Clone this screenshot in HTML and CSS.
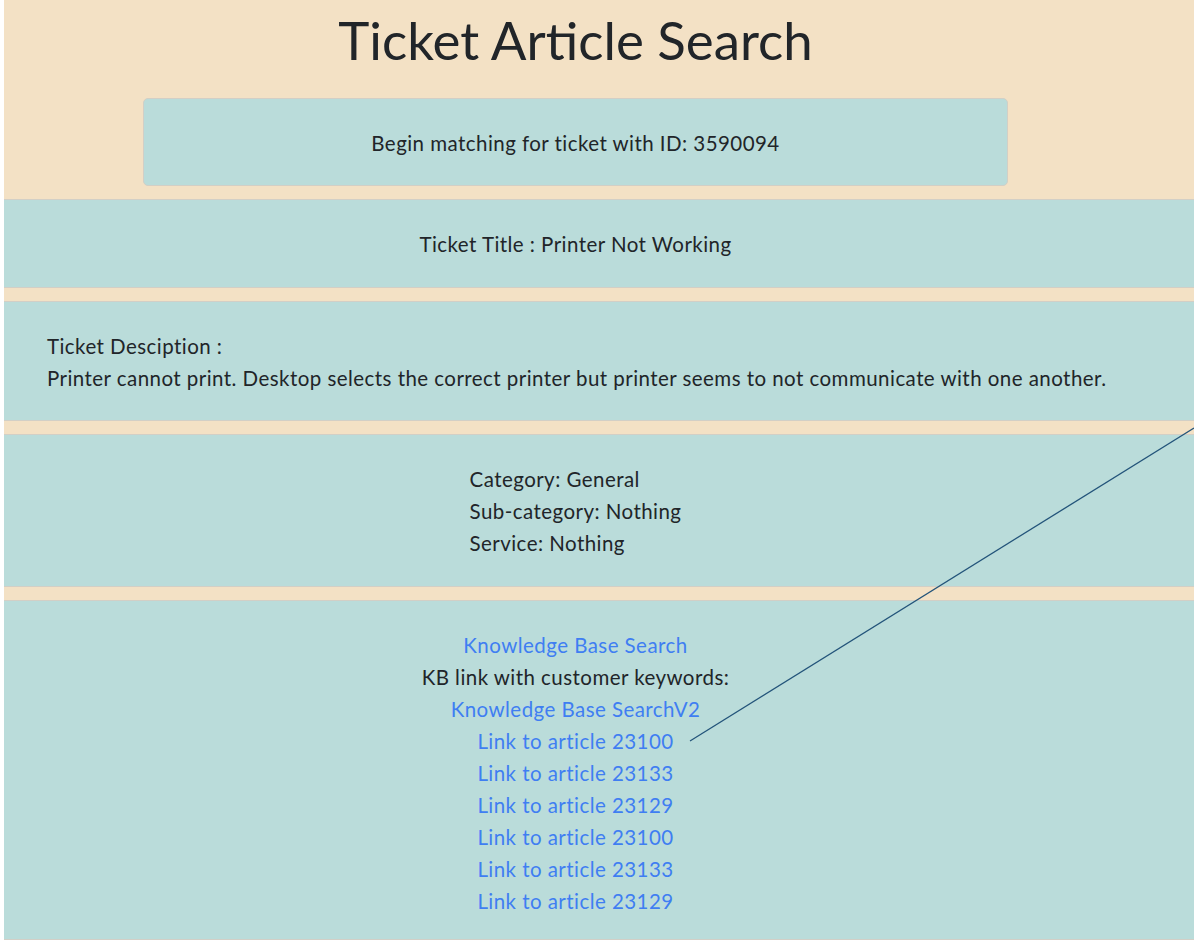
FILE: index.html
```html
<!DOCTYPE html>
<html lang="en">
<head>
<meta charset="utf-8">
<title>Ticket Article Search</title>
<link rel="stylesheet" href="styles.css">
</head>
<body>
<div class="page">
  <h1 class="title">Ticket Article Search</h1>
  <div class="card card-id">Begin matching for ticket with ID: 3590094</div>
  <div class="band band-center">Ticket Title : Printer Not Working</div>
  <div class="band band-left">
    <div>Ticket Desciption :</div>
    <div>Printer cannot print. Desktop selects the correct printer but printer seems to not communicate with one another.</div>
  </div>
  <div class="band band-center">
    <div class="meta">
      <div>Category: General</div>
      <div>Sub-category: Nothing</div>
      <div>Service: Nothing</div>
    </div>
  </div>
  <div class="band band-center band-links">
    <a href="#">Knowledge Base Search</a>
    <span>KB link with customer keywords:</span>
    <a href="#">Knowledge Base SearchV2</a>
    <a href="#">Link to article 23100</a>
    <a href="#">Link to article 23133</a>
    <a href="#">Link to article 23129</a>
    <a href="#">Link to article 23100</a>
    <a href="#">Link to article 23133</a>
    <a href="#">Link to article 23129</a>
  </div>
</div>
<svg class="annotation" width="1194" height="942" viewBox="0 0 1194 942">
  <line x1="1194" y1="428" x2="690" y2="741" stroke="#23547a" stroke-width="1.3"/>
</svg>
</body>
</html>
```

FILE: styles.css
```css
html, body {
  margin: 0;
  padding: 0;
  background: #ffffff;
}
body {
  font-family: Lato, "Open Sans", sans-serif;
  color: #212529;
  font-size: 20.5px;
  letter-spacing: 0.45px;
  line-height: 32px;
  position: relative;
  min-height: 942px;
}
.page {
  margin-left: 4px;
  background: #f3e1c5;
  display: flex;
  flex-direction: column;
}
.title {
  margin: 0 0 26px;
  padding: 7px 47px 0 0;
  font-size: 52.8px;
  letter-spacing: 0;
  line-height: 65px;
  font-weight: 400;
  text-align: center;
}
.card {
  background: #badcda;
  border: 1px solid #d2cfc6;
  border-radius: 5px;
}
.card-id {
  margin: 0 186px 0 139px;
  padding: 28px 0 26px;
  text-align: center;
}
.band {
  background: #badcda;
  border-top: 1px solid #d2cfc6;
  border-bottom: 1px solid #d2cfc6;
}
.card-id + .band {
  margin-top: 13px;
}
.band + .band {
  margin-top: 13px;
}
.band-center {
  text-align: center;
  padding: 28px 47px 27px 0;
}
.band-left {
  padding: 28px 20px 26px 43px;
}
.meta {
  display: inline-block;
  text-align: left;
}
.band-links {
  display: flex;
  flex-direction: column;
  align-items: center;
  padding-bottom: 22px;
}
.band-links a {
  color: #3f7ef2;
  text-decoration: none;
}
.annotation {
  position: absolute;
  left: 0;
  top: 0;
  pointer-events: none;
}
```
